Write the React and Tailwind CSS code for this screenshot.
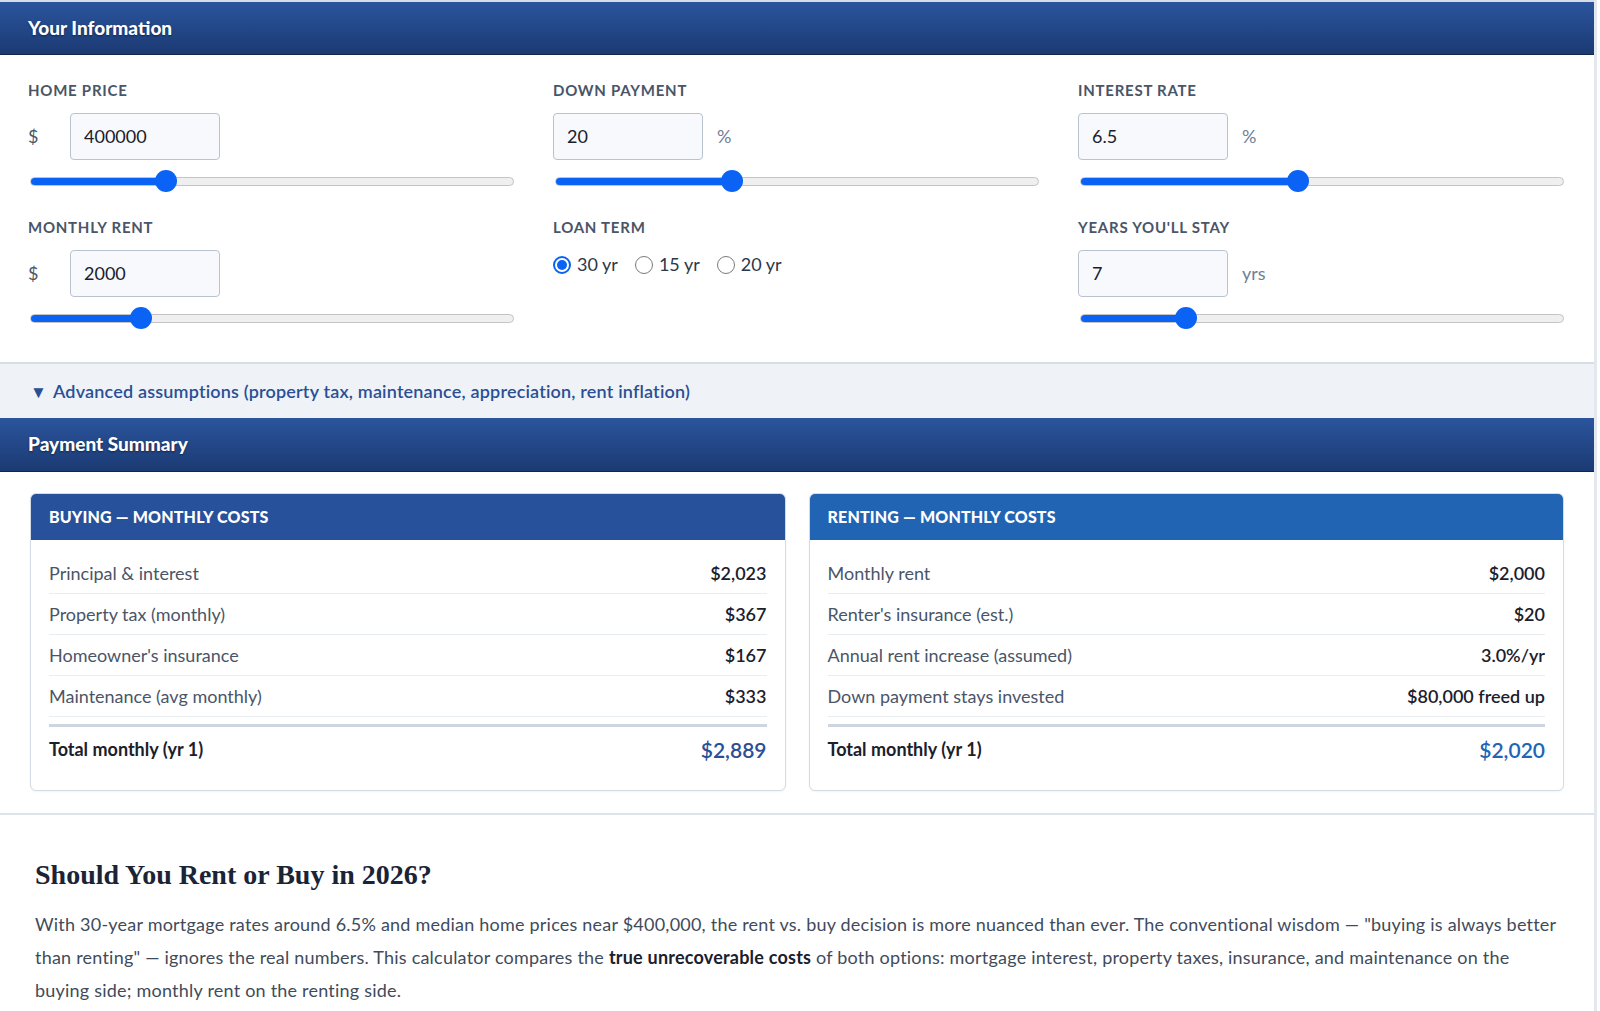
import React from "react";

const fields = [
  { label: "Home Price", prefix: "$", value: "400000", pct: 28 },
  { label: "Down Payment", suffix: "%", value: "20", pct: 36.5 },
  { label: "Interest Rate", suffix: "%", value: "6.5", pct: 45 },
];

const buying = [
  ["Principal & interest", "$2,023"],
  ["Property tax (monthly)", "$367"],
  ["Homeowner's insurance", "$167"],
  ["Maintenance (avg monthly)", "$333"],
];

const renting = [
  ["Monthly rent", "$2,000"],
  ["Renter's insurance (est.)", "$20"],
  ["Annual rent increase (assumed)", "3.0%/yr"],
  ["Down payment stays invested", "$80,000 freed up"],
];

const SectionHeader = ({ title, top }) => (
  <div
    className={`flex items-center px-[28px] bg-linear-to-b from-[#2b559d] to-[#1b3a73] border-b border-[#10264d] ${
      top ? "h-[55px] border-t-2 border-t-[#d6dce3]" : "h-[54px]"
    }`}
  >
    <h2 className="text-[19px] font-black text-white [text-shadow:0_1px_2px_rgba(0,0,0,0.45)]">{title}</h2>
  </div>
);

const Label = ({ children }) => (
  <div className="text-[15px] leading-[20px] font-bold uppercase tracking-[0.05em] text-[#4a5568]">
    {children}
  </div>
);

const NumberBox = ({ value }) => (
  <div className="w-[150px] h-[47px] flex items-center px-[13px] bg-[#f7f9fc] border border-[#b9c3ce] rounded-[4px] text-[18px] text-[#1a202c]">
    {value}
  </div>
);

const Slider = ({ pct }) => (
  <div className="relative h-[22px] mx-[2px] flex items-center">
    <div className="w-full h-[9px] rounded-full bg-[#efefef] border border-[#c4c4c4] overflow-hidden">
      <div className="h-full bg-[#0b63f6]" style={{ width: `${pct}%` }} />
    </div>
    <div
      className="absolute top-0 w-[22px] h-[22px] rounded-full bg-[#0b63f6]"
      style={{ left: `calc(${pct}% - 11px)` }}
    />
  </div>
);

const Field = ({ label, prefix, suffix, value, pct }) => (
  <div>
    <Label>{label}</Label>
    <div className="mt-[13px] flex items-center">
      {prefix && <span className="w-[42px] text-[18px] text-[#4a5568]">{prefix}</span>}
      <NumberBox value={value} />
      {suffix && <span className="ml-[14px] text-[18px] text-[#718096]">{suffix}</span>}
    </div>
    <div className="mt-[10px]">
      <Slider pct={pct} />
    </div>
  </div>
);

const Radio = ({ checked, label }) => (
  <label className="flex items-center gap-[6px] text-[18px] text-[#2d3748]">
    {checked ? (
      <span className="w-[18px] h-[18px] rounded-full border-2 border-[#0b63f6] flex items-center justify-center">
        <span className="w-[10px] h-[10px] rounded-full bg-[#0b63f6]" />
      </span>
    ) : (
      <span className="w-[18px] h-[18px] rounded-full border-[1.5px] border-[#7b7b7b] bg-white" />
    )}
    {label}
  </label>
);

const CostCard = ({ title, rows, total, headBg, totalColor }) => (
  <div className="rounded-[6px] border border-[#d3dbe4] overflow-hidden shadow-[0_1px_2px_rgba(0,0,0,0.05)] bg-white">
    <div className={`h-[46px] flex items-center px-[18px] ${headBg}`}>
      <h3 className="text-[16px] font-black uppercase tracking-[0.01em] text-white">{title}</h3>
    </div>
    <div className="px-[18px] pt-[13px] pb-[18px]">
      {rows.map(([k, v]) => (
        <div key={k} className="h-[41px] flex items-center justify-between border-b border-[#e8edf2] text-[18px]">
          <span className="text-[#4a5568]">{k}</span>
          <span className="font-semibold text-[#1a202c]">{v}</span>
        </div>
      ))}
      <div className="mt-[7px] border-t-[3px] border-[#cdd6e0] h-[48px] flex items-center justify-between">
        <span className="text-[18px] font-bold text-[#1a202c]">Total monthly (yr 1)</span>
        <span className={`text-[21px] font-semibold ${totalColor}`}>{total}</span>
      </div>
    </div>
  </div>
);

export default function App() {
  return (
    <div className="min-h-screen bg-white font-['Lato',sans-serif]">
      <div className="w-[1597px] border-r-[3px] border-[#e3e8ee]">
        <SectionHeader title="Your Information" top />

        {/* inputs */}
        <div className="grid grid-cols-3 gap-x-[37px] gap-y-[25px] px-[28px] pt-[25px] pb-[33px]">
          {fields.map((f) => (
            <Field key={f.label} {...f} />
          ))}

          <Field label="Monthly Rent" prefix="$" value="2000" pct={23} />

          <div>
            <Label>Loan Term</Label>
            <div className="mt-[14px] flex items-center gap-[17px]">
              <Radio checked label="30 yr" />
              <Radio label="15 yr" />
              <Radio label="20 yr" />
            </div>
          </div>

          <Field label="Years You'll Stay" suffix="yrs" value="7" pct={22} />
        </div>

        {/* advanced */}
        <div className="h-[56px] flex items-center px-[30px] bg-[#eff3f8] border-t-2 border-[#d6dde6]">
          <span className="text-[18px] font-semibold tracking-[0.01em] text-[#2a4f95]">
            <span className="text-[17px] mr-[6px]">▼</span>
            Advanced assumptions (property tax, maintenance, appreciation, rent inflation)
          </span>
        </div>

        <SectionHeader title="Payment Summary" />

        <div className="grid grid-cols-2 gap-[23px] px-[30px] pt-[21px] pb-[22px] border-b-2 border-[#dde3ea]">
          <CostCard
            title="Buying — Monthly Costs"
            rows={buying}
            total="$2,889"
            headBg="bg-[#27519b]"
            totalColor="text-[#2a4f96]"
          />
          <CostCard
            title="Renting — Monthly Costs"
            rows={renting}
            total="$2,020"
            headBg="bg-[#2164b4]"
            totalColor="text-[#2264b5]"
          />
        </div>

        {/* article */}
        <div className="px-[35px] pt-[43px] pb-[20px]">
          <h2 className="font-['Liberation_Serif',serif] text-[28px] leading-[34px] font-bold text-[#1a2436]">
            Should You Rent or Buy in 2026?
          </h2>
          <p className="mt-[16px] text-[18px] leading-[33px] tracking-[0.012em] text-[#3f4b5b]">
            With 30-year mortgage rates around 6.5% and median home prices near $400,000, the rent vs. buy decision is
            more nuanced than ever. The conventional wisdom — "buying is always better than renting" — ignores the real
            numbers. This calculator compares the <strong className="font-bold text-[#1a202c]">true unrecoverable costs</strong> of
            both options: mortgage interest, property taxes, insurance, and maintenance on the buying side; monthly rent on
            the renting side.
          </p>
        </div>
      </div>
    </div>
  );
}
